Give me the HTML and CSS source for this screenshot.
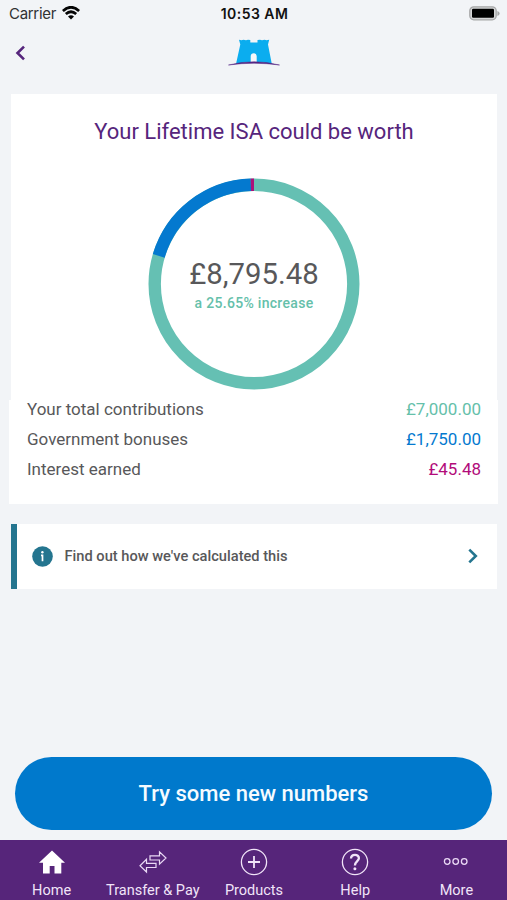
FILE: index.html
```html
<!DOCTYPE html>
<html lang="en">
<head>
<meta charset="utf-8">
<title>Lifetime ISA</title>
<link rel="stylesheet" href="styles.css">
</head>
<body>
<div class="status">
  <div class="carrier"><span>Carrier</span>
    <svg width="18" height="14" viewBox="0 0 18 14" fill="none" stroke="#050505" stroke-width="2.7"><path d="M.9 4.9Q9-2.4 17.1 4.9"/><path d="M3.8 8.1Q9 3.4 14.2 8.1"/><path d="M9 13.4L6 10.4Q9 7.9 12 10.4Z" fill="#050505" stroke="none"/></svg>
  </div>
  <span class="time">10:53 AM</span>
  <svg class="battery" width="31" height="15" viewBox="0 0 31 15"><rect x=".8" y=".8" width="26.4" height="13" rx="4" fill="#d5d6d7" stroke="#a6a7a8" stroke-width="1.3"/><rect x="3" y="2.8" width="22" height="9" rx="1.2" fill="#000"/><path d="M28.4 5v5q2.2-.8 2.2-2.5T28.400 5Z" fill="#a6a7a8"/></svg>
</div>
<header class="header">
  <svg class="back" width="12" height="16" viewBox="0 0 12 16" fill="none" stroke="#56257c" stroke-width="2.6"><path d="M9 1.600L2.500 8L9 14.400"/></svg>
  <svg class="logo" width="52" height="28" viewBox="0 0 52 28"><path d="M11 .8L13.500 1.300L15.500.8L18 1.300L20 .8L22.300 1V3.600H29.500V1L32 .8L34 1.300L36.500.8L38.500 1.300L41.200.8L40 5.500L43.800 25Q26 21 8 25L12.300 5.500Z" fill="#0badef"/><path d="M22.700 23.500V17Q23 14.300 25.700 14.300T28.700 17V23.500Z" fill="#f5f7fa"/><path d="M.5 26Q26 19.500 51.500 26Q26 22.500.5 26Z" fill="#542785" stroke="#542785" stroke-width=".5"/></svg>
</header>
<main>
  <section class="worth">
    <h1>Your Lifetime ISA could be worth</h1>
    <div class="chart">
      <svg class="ring" width="212" height="212" viewBox="0 0 212 212" fill="none" stroke-width="12.400">
        <g transform="rotate(-90 106 106)">
          <circle cx="106" cy="106" r="99.300" stroke="#65c0b3"/>
          <circle cx="106" cy="106" r="99.300" stroke="#0479cf" pathLength="100" stroke-dasharray="19.900 80.100" stroke-dashoffset="-79.590"/>
          <circle cx="106" cy="106" r="99.300" stroke="#ac1279" pathLength="100" stroke-dasharray=".52 99.480" stroke-dashoffset="-99.480"/>
        </g>
      </svg>
      <div class="total"><strong>£8,795.48</strong><span>a 25.65% increase</span></div>
    </div>
  </section>
  <dl class="breakdown">
    <div><dt>Your total contributions</dt><dd class="teal">£7,000.00</dd></div>
    <div><dt>Government bonuses</dt><dd class="blue">£1,750.00</dd></div>
    <div><dt>Interest earned</dt><dd class="pink">£45.48</dd></div>
  </dl>
  <a class="info">
    <svg width="21" height="21" viewBox="0 0 21 21"><circle cx="10.500" cy="10.500" r="10.300" fill="#24758f"/><circle cx="10.400" cy="6.300" r="1.200" fill="#fff"/><path d="M9 9.300H10.500V15.300" fill="none" stroke="#fff" stroke-width="1.700"/></svg>
    <span>Find out how we've calculated this</span>
    <svg class="next" width="12" height="16" viewBox="0 0 12 16" fill="none" stroke="#24758f" stroke-width="2.600"><path d="M2.300 1.600L8.800 8L2.300 14.400"/></svg>
  </a>
</main>
<button class="cta"><span>Try some new numbers</span></button>
<nav class="tabs">
  <a><svg width="28" height="28" viewBox="0 0 28 28"><path d="M14 2.500L27 14.700H23.300V25.500H16.500V18H11.700V25.500H5V14.700H1Z" fill="#fff"/></svg><span>Home</span></a>
  <a><svg width="28" height="28" viewBox="0 0 28 28" fill="none" stroke="#ead9f5" stroke-width="1.200"><path d="M11 7.800H20.500V3.800L27 10L20.500 16.200V12H11ZM17 15.300H7.500V11.300L1 17.700L7.500 24V19.500H17Z"/></svg><span>Transfer &amp; Pay</span></a>
  <a><svg width="28" height="28" viewBox="0 0 28 28" fill="none" stroke="#f1e4f8" stroke-width="1.300"><circle cx="14" cy="14" r="12.600"/><path d="M8 14H20M14 8V20" stroke-width="1.800"/></svg><span>Products</span></a>
  <a><svg width="28" height="28" viewBox="0 0 28 28" fill="none" stroke="#f1e4f8" stroke-width="1.300"><circle cx="14" cy="14" r="12.600"/><path d="M10 10.500C10.100 5.600 18 5.800 17.900 10.300C17.800 13 14 13.400 13.900 17.500" stroke-width="2.300"/><circle cx="13.900" cy="20.700" r="1.500" fill="#f1e4f8" stroke="none"/></svg><span>Help</span></a>
  <a><svg width="28" height="28" viewBox="0 0 28 28" fill="none" stroke="#ead9f5" stroke-width="1.300"><circle cx="5.200" cy="13.500" r="2.800"/><circle cx="13.700" cy="13.500" r="2.800"/><circle cx="22.200" cy="13.500" r="2.800"/></svg><span>More</span></a>
</nav>
</body>
</html>
```
FILE: styles.css
```css
* { box-sizing: border-box; }
body {
  margin: 0;
  width: 507px;
  height: 900px;
  display: flex;
  flex-direction: column;
  background: #f2f4f7;
  font-family: Roboto, sans-serif;
  color: #58585a;
  overflow: hidden;
  white-space: nowrap;
}
svg { display: block; flex: none; }
.status {
  height: 28px;
  display: grid;
  grid-template-columns: 1fr auto 1fr;
  align-items: center;
  padding: 0 7px 0 9px;
  font: 15px/18px Inter, sans-serif;
  color: #303133;
}
.carrier { display: flex; align-items: center; gap: 6px; }
.carrier span { letter-spacing: -.3px; }
.carrier svg { margin-top: -2px; }
.time { font-weight: 600; font-size: 14px; letter-spacing: .45px; color: #111; }
.battery { justify-self: end; margin-top: -2px; }
.header {
  height: 66px;
  display: grid;
  grid-template-columns: 1fr 52px 1fr;
  align-items: start;
  padding: 0 14px;
}
.back { margin: 17px 0 0 1px; }
.logo { margin-top: 11px; }
.worth { height: 306px; margin: 0 10px 0 11px; background: #fff; text-align: center; }
h1 {
  margin: 0;
  padding-top: 24px;
  font-size: 22px;
  line-height: 28px;
  font-weight: 400;
  color: #56257c;
}
.chart { display: grid; width: 212px; margin: 32px auto 0; height: 212px; }
.ring, .total { grid-area: 1 / 1; }
.total { display: flex; flex-direction: column; align-items: center; padding-top: 78px; }
.total strong { font-size: 29.300px; font-weight: 400; line-height: 36px; }
.total span { font-size: 14px; font-weight: 500; line-height: 18px; margin-top: 2px; color: #65c0aa; letter-spacing: .3px; }
.breakdown {
  height: 104px;
  margin: 0 9px;
  padding: 0 17px 0 18px;
  background: #fff;
  font-size: 17px;
}
.breakdown div { display: flex; justify-content: space-between; line-height: 18px; padding-bottom: 12px; }
.breakdown dt, .breakdown dd { margin: 0; }
.teal { color: #65c0aa; }
.blue { color: #0479cf; }
.pink { color: #b20b7a; }
.info {
  height: 65px;
  margin: 19.500px 10px 0 11px;
  display: flex;
  align-items: center;
  gap: 11.500px;
  padding: 0 18px 0 15px;
  border-left: 6px solid #24758f;
  background: #fff;
  font-size: 14.650px;
  font-weight: 500;
}
.next { margin-left: auto; }
.cta {
  height: 73px;
  margin: auto 15px 10px;
  border: 0;
  border-radius: 37px;
  background: #0079cc;
  color: #f5fbff;
  font: 500 22px/28px Roboto, sans-serif;
}
.tabs {
  height: 60px;
  flex: none;
  display: grid;
  grid-template-columns: repeat(5, 1fr);
  padding-left: 1px;
  background: #56257a;
  color: #f1e4f8;
  font-size: 14.500px;
  line-height: 18px;
}
.tabs a { display: flex; flex-direction: column; align-items: center; padding-top: 8px; gap: 6px; }
```
